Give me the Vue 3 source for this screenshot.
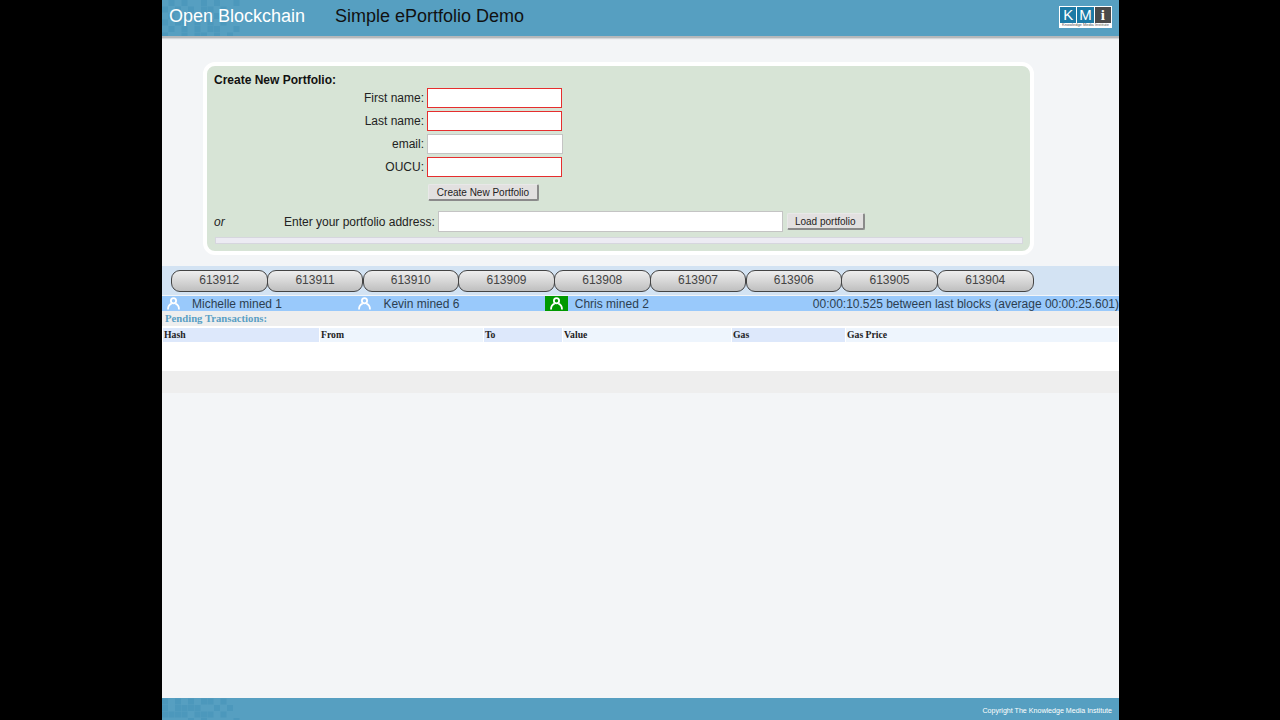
<template>
  <div class="page">
    <header class="top-bar">
      <svg class="checks" width="90" height="36" viewBox="0 0 90 36">
        <rect v-for="c in headChecks" :key="c.x + '-' + c.y" :x="c.x" :y="c.y" width="6" height="6" fill="#4c98bc" />
      </svg>
      <div class="brand">Open Blockchain</div>
      <div class="demo-title">Simple ePortfolio Demo</div>
      <div class="kmi-logo">
        <div class="kmi-letters">
          <span class="kmi-k">K</span>
          <span class="kmi-k">M</span>
          <span class="kmi-i">i</span>
        </div>
        <div class="kmi-sub">Knowledge Media Institute</div>
      </div>
    </header>

    <main class="content">
      <section class="form-panel">
        <div class="form-title">Create New Portfolio:</div>
        <div class="field-row" v-for="f in fields" :key="f.label" :class="{ 'row-tall': f.tall }">
          <label class="field-label">{{ f.label }}:</label>
          <input class="field-input" :class="{ required: f.required }" type="text" />
        </div>
        <div class="create-row">
          <button class="grey-btn create-btn">Create New Portfolio</button>
        </div>
        <div class="load-row">
          <span class="or-text">or</span>
          <span class="load-label">Enter your portfolio address:</span>
          <input class="load-input" type="text" />
          <button class="grey-btn load-btn">Load portfolio</button>
        </div>
        <div class="status-bar"></div>
      </section>

      <div class="block-band">
        <div class="block-tab" v-for="b in blocks" :key="b">{{ b }}</div>
      </div>

      <div class="miner-bar">
        <div class="miner" v-for="m in miners" :key="m.name" :class="{ current: m.current }">
          <span class="miner-icon">
            <svg width="13" height="13" viewBox="0 0 13 13" fill="none" stroke="#fff" stroke-width="1.8">
              <circle cx="6.5" cy="3.8" r="2.6" />
              <path d="M1 12.5 C1 9.2 2.8 7.2 4.6 6.6 M12 12.5 C12 9.2 10.2 7.2 8.4 6.6" />
            </svg>
          </span>
          <span class="miner-name">{{ m.name }} mined {{ m.count }}</span>
        </div>
        <div class="block-time">00:00:10.525 between last blocks (average 00:00:25.601)</div>
      </div>

      <div class="pending-title">Pending Transactions:</div>
      <div class="pending-table">
        <div class="pending-head">
          <div class="head-cell" v-for="(h, i) in columns" :key="h" :class="i % 2 ? 'odd' : 'even'">{{ h }}</div>
        </div>
      </div>
      <div class="pending-foot"></div>
    </main>

    <footer class="bottom-bar">
      <svg class="checks" width="90" height="22" viewBox="0 0 90 22">
        <rect v-for="c in footChecks" :key="c.x + '-' + c.y" :x="c.x" :y="c.y" width="6" height="6" fill="#4c98bc" />
      </svg>
      <div class="copyright">Copyright The Knowledge Media Institute</div>
    </footer>
  </div>
</template>

<script setup>
const fields = [
  { label: 'First name', required: true },
  { label: 'Last name', required: true },
  { label: 'email', required: false, tall: true },
  { label: 'OUCU', required: true }
]

const blocks = [613912, 613911, 613910, 613909, 613908, 613907, 613906, 613905, 613904]

const miners = [
  { name: 'Michelle', count: 1 },
  { name: 'Kevin', count: 6 },
  { name: 'Chris', count: 2, current: true }
]

const columns = ['Hash', 'From', 'To', 'Value', 'Gas', 'Gas Price']

// the faint checker in the corner of both bars
function checks(rows, top) {
  const out = []
  rows.forEach((row, r) => {
    row.split('').forEach((ch, c) => {
      if (ch === '#') out.push({ x: c * 6.5, y: top + r * 6.5 })
    })
  })
  return out
}

const headChecks = checks([
  '.#.#..#.#..#',
  '#.#.#.##.#..',
  '.#.##.#.#.#.',
  '#.##.#.#.#..',
  '.#.#.#.##..#',
  '#..#.##.#.#.'
], 0)

const footChecks = checks([
  '#.#.#.##.#',
  '#.####..#.#',
  '####.###.#',
  '....#.#....#'
], 0.5)
</script>

<style>
html, body {
  margin: 0;
  height: 100%;
  background: #000;
}
</style>

<style scoped>
.page {
  width: 957px;
  height: 720px;
  margin-left: 162px;
  background: #f3f5f7;
  display: flex;
  flex-direction: column;
  font-family: "Liberation Sans", Arial, sans-serif;
  color: #222;
  overflow: hidden;
}
.top-bar {
  position: relative;
  height: 32px;
  flex: none;
  background: #569fc1;
  border-bottom: 2px solid #b5b8bb;
  box-shadow: 0 1px 1px #d5d7da;
  display: flex;
  align-items: center;
  padding: 0 7px 4px;
}
.checks {
  position: absolute;
  left: 0;
  top: 0;
}
.brand {
  position: relative;
  width: 166px;
  font-size: 18px;
  color: #fff;
}
.demo-title {
  position: relative;
  font-size: 18px;
  color: #111;
}
.kmi-logo {
  margin-left: auto;
  margin-top: 2px;
  width: 53px;
  height: 22px;
  background: #fff;
  box-sizing: border-box;
  padding: 1px 1px 0;
}
.kmi-letters {
  display: flex;
  gap: 1px;
}
.kmi-k, .kmi-i {
  flex: 1;
  height: 16px;
  line-height: 16px;
  text-align: center;
  font-size: 15px;
  color: #fff;
  background: #1c7aa6;
}
.kmi-i {
  background: #4a4a4a;
  font-family: "Liberation Serif", serif;
  font-weight: bold;
}
.kmi-sub {
  font-size: 4px;
  line-height: 4px;
  color: #555;
  white-space: nowrap;
  text-align: center;
}
.content {
  flex: 1;
  display: flex;
  flex-direction: column;
}
.form-panel {
  width: 831px;
  height: 193px;
  margin: 24px 0 11px 41px;
  padding: 7px 7px 0;
  box-sizing: border-box;
  border: 4px solid #fff;
  border-radius: 12px;
  background: #d7e4d6;
  font-size: 12px;
}
.form-title {
  font-weight: bold;
  line-height: 15px;
  color: #111;
}
.field-row {
  display: flex;
  align-items: center;
  height: 20px;
  margin-bottom: 3px;
}
.field-label {
  width: 210px;
  text-align: right;
  margin-right: 3px;
}
.field-input {
  width: 135px;
  height: 20px;
  box-sizing: border-box;
  border: 1px solid #c4c4c4;
  background: #fff;
  padding: 0;
  margin: 0;
}
.field-input.required {
  border-color: #e62e2e;
}
.row-tall .field-input {
  width: 136px;
  border-width: 1.5px;
}
.create-row {
  display: flex;
  padding-left: 214px;
  margin-top: 7px;
}
.grey-btn {
  background: #e2e0e0;
  border: 1px solid #e8e8e8;
  border-right: 2px solid #8a8a8a;
  border-bottom: 2px solid #8a8a8a;
  border-radius: 2px;
  font-family: "Liberation Sans", Arial, sans-serif;
  font-size: 10px;
  color: #222;
  padding: 0;
  height: 17px;
}
.create-btn {
  width: 111px;
}
.load-row {
  display: flex;
  align-items: center;
  margin-top: 10px;
  height: 21px;
}
.or-text {
  width: 70px;
  font-style: italic;
}
.load-label {
  margin-right: 3px;
  white-space: nowrap;
}
.load-input {
  width: 345px;
  height: 21px;
  box-sizing: border-box;
  border: 1px solid #c4c4c4;
  background: #fff;
  padding: 0;
  margin: 0 4px 0 0;
}
.load-btn {
  width: 78px;
}
.status-bar {
  height: 7px;
  margin: 5px 0 0 1px;
  width: 808px;
  box-sizing: border-box;
  background: #ecebf3;
  border: 1px solid #d6d6de;
}
.block-band {
  height: 29px;
  flex: none;
  background: #d3e3f3;
  display: flex;
  align-items: center;
  padding-left: 9px;
}
.block-tab {
  width: 96.5px;
  margin-right: -0.75px;
  height: 22px;
  box-sizing: border-box;
  border: 1px solid #444;
  border-radius: 9px;
  background: linear-gradient(#eeeeee, #bfbfbf);
  text-align: center;
  line-height: 19px;
  font-size: 12px;
  color: #444;
}
.miner-bar {
  margin-top: 1px;
  height: 15px;
  flex: none;
  background: #99c9fb;
  display: flex;
  align-items: center;
  font-size: 12px;
  color: #2c3e50;
}
.miner {
  width: 191.4px;
  display: flex;
  align-items: center;
  height: 100%;
}
.miner-icon {
  width: 23px;
  height: 100%;
  display: flex;
  align-items: center;
  justify-content: center;
  margin-right: 7px;
}
.miner.current .miner-icon {
  background: #009900;
}
.block-time {
  margin-left: auto;
  white-space: nowrap;
}
.pending-title {
  height: 15px;
  flex: none;
  background: #eeeeee;
  padding-left: 3px;
  font-family: "Liberation Serif", serif;
  font-weight: bold;
  font-size: 10.7px;
  line-height: 15px;
  color: #5a9fc4;
}
.pending-table {
  height: 45px;
  flex: none;
  background: #fff;
  padding: 2px 0 0 1px;
  box-sizing: border-box;
}
.pending-head {
  display: grid;
  grid-template-columns: 157px 164px 79px 169px 114px 1fr;
  height: 14px;
}
.head-cell {
  font-family: "Liberation Serif", serif;
  font-weight: bold;
  font-size: 9.7px;
  line-height: 14px;
  padding-left: 1px;
  margin-right: 1px;
  color: #222;
}
.head-cell.even {
  background: #dde8fb;
}
.head-cell.odd {
  background: #eef5fd;
}
.pending-foot {
  height: 22px;
  flex: none;
  background: #eeeeee;
}
.bottom-bar {
  position: relative;
  height: 22px;
  box-sizing: border-box;
  padding: 3px 7px 0 0;
  flex: none;
  background: #569fc1;
  display: flex;
  align-items: center;
  justify-content: flex-end;
}
.copyright {
  position: relative;
  font-size: 7.1px;
  color: #fff;
}
</style>
